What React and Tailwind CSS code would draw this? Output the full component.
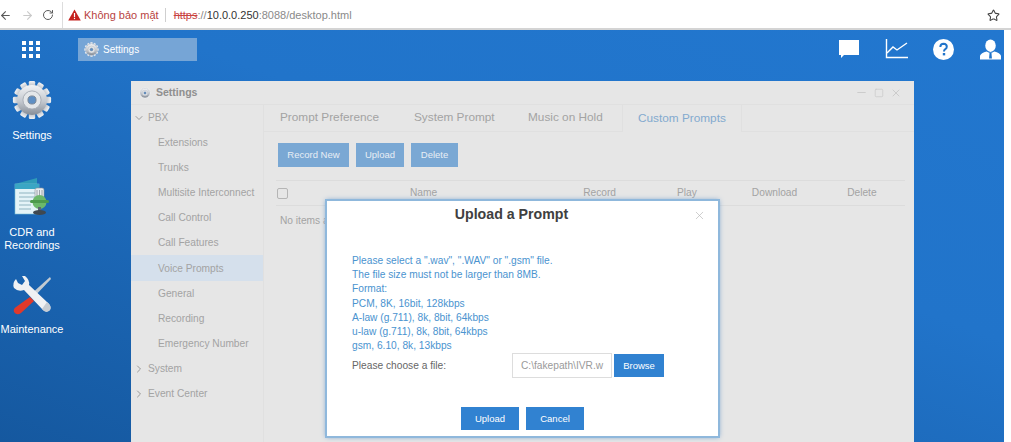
import { ArrowLeft, ArrowRight, RotateCw, Star, ChevronDown, ChevronRight, Minus, Square, X } from 'lucide-react'

const FONT = "font-['Liberation_Sans',Arial,sans-serif]"

const menuItems = ['Extensions', 'Trunks', 'Multisite Interconnect', 'Call Control', 'Call Features', 'Voice Prompts', 'General', 'Recording', 'Emergency Number']
const formatLines = [
  'Please select a ".wav", ".WAV" or ".gsm" file.',
  'The file size must not be larger than 8MB.',
  'Format:',
  'PCM, 8K, 16bit, 128kbps',
  'A-law (g.711), 8k, 8bit, 64kbps',
  'u-law (g.711), 8k, 8bit, 64kbps',
  'gsm, 6.10, 8k, 13kbps',
]

function Gear({ size = 44, id = 'gear' }) {
  const teeth = Array.from({ length: 12 }, (_, i) => i * 30)
  return (
    <svg width={size} height={size} viewBox="0 0 44 44">
      <defs>
        <linearGradient id={id} x1="0" y1="0" x2="0" y2="1">
          <stop offset="0" stopColor="#f2f3f5" />
          <stop offset="0.55" stopColor="#c3c8cf" />
          <stop offset="1" stopColor="#868d97" />
        </linearGradient>
      </defs>
      {teeth.map((a) => (
        <rect key={a} x="18.5" y="1" width="7" height="9" rx="1.5" fill={`url(#${id})`} transform={`rotate(${a} 22 22)`} />
      ))}
      <circle cx="22" cy="22" r="16.5" fill={`url(#${id})`} />
      <circle cx="22" cy="22" r="10" fill="#e4e7ea" stroke="#a4aab3" strokeWidth="1" />
      <circle cx="22" cy="22" r="4.5" fill="#5f8fc4" stroke="#7b8591" strokeWidth="1" />
    </svg>
  )
}

function CdrIcon() {
  return (
    <svg width="38" height="38" viewBox="0 0 38 38">
      <path d="M2 6 L24 0 V6 L2 8 Z" fill="#2f9bb8" />
      <rect x="2" y="6" width="24" height="30" fill="#e4f3f7" stroke="#7cc2d6" strokeWidth="0.6" />
      <rect x="2" y="6" width="24" height="5" fill="#3aa6c4" />
      <path d="M6 15 H22 M6 19 H22 M6 23 H20 M6 27 H18 M6 31 H18" stroke="#8fb4c0" strokeWidth="1" />
      <rect x="22" y="10" width="9" height="10" rx="2" fill="#e8ecef" stroke="#8b9299" strokeWidth="0.6" />
      <path d="M24 12 V18 M26.5 12 V18 M29 12 V18" stroke="#8b9299" strokeWidth="0.8" />
      <ellipse cx="26.5" cy="24" rx="7" ry="7" fill="#6cb86a" />
      <rect x="17" y="22" width="19" height="3" rx="1.5" fill="#4d9a4c" />
      <rect x="25" y="29" width="3" height="4" fill="#5c6670" />
      <ellipse cx="26.5" cy="34.5" rx="6.5" ry="2.5" fill="#3f4850" />
    </svg>
  )
}

function ToolsIcon() {
  return (
    <svg width="40" height="40" viewBox="0 0 40 40">
      <path d="M38 1 L39 3 L21 22 L18 19 Z" fill="#c3cbd2" />
      <path d="M18 21 L22 25 L9 37 Q5 40 2 36 Q1 33 4 31 Z" fill="#e0392b" />
      <path d="M4 3 Q0 7 2 12 Q6 16 12 14 L30 33 Q34 38 38 34 Q40 30 35 26 L17 9 Q18 4 13 0 L10 0 L13 5 L10 9 L6 7 Z" fill="#f0f1f3" />
      <path d="M30 33 Q34 38 38 34 Q40 30 35 26 Z" fill="#c7ccd2" />
    </svg>
  )
}

function DesktopIcon({ icon, children, className }) {
  return (
    <div className={`flex flex-col items-center text-center text-[11px] leading-[13.5px] text-white ${className}`}>
      {icon}
      {children}
    </div>
  )
}

export default function App() {
  return (
    <div className={`${FONT} flex h-[442px] w-[1011px] flex-col overflow-hidden bg-white`}>
      {/* browser toolbar */}
      <div className="flex h-[30px] shrink-0 items-center border-b-2 border-[#d4d4d4] pt-[2px] text-[#5a5a5a]">
        <ArrowLeft size={13} className="-ml-[1px] shrink-0" />
        <ArrowRight size={13} className="ml-[9px] shrink-0 text-[#c9c9c9]" />
        <RotateCw size={12} className="ml-[8px] shrink-0" />
        <div className="ml-[8px] flex h-[26px] flex-1 items-center border-l border-[#dddddd] pl-[5px] text-[11px]">
          <svg width="13" height="12" viewBox="0 0 13 12" className="shrink-0">
            <path d="M6.5 0.5 L12.8 11.5 H0.2 Z" fill="#c5221f" />
            <rect x="5.9" y="4" width="1.2" height="4" fill="#fff" />
            <rect x="5.9" y="8.8" width="1.2" height="1.3" fill="#fff" />
          </svg>
          <span className="ml-[3px] text-[#b8433f]">Không bảo mật</span>
          <span className="ml-[6px] h-[14px] w-px bg-[#cfcfcf]" />
          <span className="ml-[8px] text-[#c9423f] line-through decoration-[#c9423f]">https</span>
          <span className="text-[#8a8a8a]">://</span>
          <span className="text-[#333333]">10.0.0.250</span>
          <span className="text-[#8a8a8a]">:8088/desktop.html</span>
          <Star size={13} className="ml-auto mr-[11px] text-[#444444]" strokeWidth={2} />
        </div>
      </div>

      {/* desktop */}
      <div className="relative mr-[7px] min-h-0 flex-1 overflow-hidden bg-[linear-gradient(200deg,#2277cf_0%,#2174ca_40%,#15589f_100%)]">
        <div className="flex h-[38px] items-center pr-[3px]">
          <div className="ml-[22px] grid w-[18px] grid-cols-3 gap-[2.5px]">
            {Array.from({ length: 9 }).map((_, i) => (
              <span key={i} className="h-[4px] w-[4px] bg-white" />
            ))}
          </div>
          <div className="ml-[38px] flex h-[23px] w-[119px] items-center bg-[#76a5d6] pl-[6px] text-[10px] text-white">
            <Gear size={15} id="gear-task" />
            <span className="ml-[4px]">Settings</span>
          </div>
          <div className="ml-auto flex items-center gap-[25px]">
            <svg width="22" height="20" viewBox="0 0 22 20">
              <path d="M1 1 H21 V16 H6 L3 19 V16 H1 Z" fill="#fff" />
            </svg>
            <svg width="23" height="20" viewBox="0 0 23 20" fill="none" stroke="#fff" strokeWidth="1.4">
              <path d="M1.5 0 V18.5 H23" />
              <path d="M2 14 L8 8 L12 11 L22 4" />
            </svg>
            <svg width="21" height="21" viewBox="0 0 21 21">
              <circle cx="10.5" cy="10.5" r="10.5" fill="#fff" />
              <path d="M7.3 8 Q7.5 4.8 10.6 4.8 Q13.8 5 13.8 7.8 Q13.8 9.4 12 10.4 Q11 11 11 12.6" fill="none" stroke="#2174ca" strokeWidth="2" />
              <rect x="9.8" y="14" width="2.4" height="2.4" fill="#2174ca" />
            </svg>
            <svg width="21" height="21" viewBox="0 0 22 21" className="ml-[1px]">
              <ellipse cx="11" cy="6.5" rx="5.5" ry="6.5" fill="#fff" />
              <path d="M0 21 V17 Q1 14 7 12.5 L9.5 14 H12.5 L15 12.5 Q21 14 22 17 V21 Z" fill="#fff" />
              <path d="M10 14 H12 L12.5 20 H9.5 Z" fill="#2174ca" />
            </svg>
          </div>
        </div>

        {/* desktop icons */}
        <div className="flex w-[64px] flex-col items-center">
          <DesktopIcon icon={<Gear size={40} id="gear-desk" />} className="mt-[12px]">
            <span className="mt-[9px]">Settings</span>
          </DesktopIcon>
          <DesktopIcon icon={<CdrIcon />} className="mt-[35px]">
            <span className="mt-[10px]">CDR and<br />Recordings</span>
          </DesktopIcon>
          <DesktopIcon icon={<ToolsIcon />} className="mt-[23px]">
            <span className="mt-[7px]">Maintenance</span>
          </DesktopIcon>
        </div>

        {/* settings window */}
        <div className="absolute left-[131px] top-[51px] flex h-[380px] w-[783px] flex-col bg-[#e6e6e6] text-[10.2px] text-[#a3a3a3]">
          <div className="flex h-[24px] shrink-0 items-center border-b border-[#e0e0e0] pl-[8px] pr-[12px]">
            <Gear size={12} id="gear-title" />
            <span className="ml-[5px] text-[10.5px] font-bold text-[#8f8f8f]">Settings</span>
            <Minus size={13} className="ml-auto text-[#cccccc]" />
            <Square size={10} className="ml-[6px] text-[#cccccc]" />
            <X size={12} className="ml-[6px] text-[#cccccc]" />
          </div>
          <div className="flex min-h-0 flex-1">
            <div className="w-[133px] shrink-0 border-r border-[#e0e0e0]">
              <div className="flex h-[25px] items-center pl-[2px]">
                <ChevronDown size={12} className="text-[#9a9a9a]" />
                <span className="ml-[3px]">PBX</span>
              </div>
              {menuItems.map((item) => (
                <div
                  key={item}
                  className={`flex items-center pl-[27px] ${item === 'Voice Prompts' ? 'h-[26px] bg-[#d5e0ec] pt-[2px]' : 'h-[25px]'}`}
                >
                  {item}
                </div>
              ))}
              {['System', 'Event Center'].map((item) => (
                <div key={item} className="flex h-[25px] items-center pl-[2px]">
                  <ChevronRight size={12} className="text-[#9a9a9a]" />
                  <span className="ml-[3px]">{item}</span>
                </div>
              ))}
            </div>
            <div className="min-w-0 flex-1">
              <div className="flex h-[27px] items-center border-b border-[#e0e0e0] pl-[16px] text-[11.8px]">
                <span className="w-[134px]">Prompt Preference</span>
                <span className="w-[114px]">System Prompt</span>
                <span className="w-[94px]">Music on Hold</span>
                <span className="-mb-px flex h-[27px] w-[120px] items-center border-x border-[#e0e0e0] bg-[#e6e6e6] pl-[15px] text-[#83aacf]">
                  Custom Prompts
                </span>
              </div>
              <div className="mt-[11px] flex gap-[7px] pl-[14px] text-[9.5px] text-[#e8eef5]">
                <span className="flex h-[24px] w-[71px] items-center justify-center bg-[#7aa8d4]">Record New</span>
                <span className="flex h-[24px] w-[48px] items-center justify-center bg-[#7aa8d4]">Upload</span>
                <span className="flex h-[24px] w-[47px] items-center justify-center bg-[#7aa8d4]">Delete</span>
              </div>
              <div className="ml-[12px] mr-[9px] mt-[13px] flex h-[26px] items-center border-y border-[#dcdcdc]">
                <span className="ml-[1px] h-[11px] w-[11px] rounded-[2px] border border-[#b5b5b5]" />
                <span className="ml-[122px]">Name</span>
                <span className="ml-[146px]">Record</span>
                <span className="ml-[61px]">Play</span>
                <span className="ml-[55px]">Download</span>
                <span className="ml-[50px]">Delete</span>
              </div>
              <div className="ml-[16px] mt-[7px]">No items available</div>
            </div>
          </div>

          {/* upload modal */}
          <div className="absolute left-[196px] top-[120px] flex h-[235px] w-[391px] flex-col bg-white px-[25px] shadow-[0_0_0_2px_#8fb8dc,0_0_5px_1px_#6f9ccb]">
            <div className="relative flex h-[28px] shrink-0 items-center justify-center pr-[22px] text-[14.2px] font-bold text-[#404040]">
              Upload a Prompt
              <X size={13} strokeWidth={1.2} className="absolute right-[-13px] top-[8px] text-[#b5b5b5]" />
            </div>
            <div className="mt-[25px] leading-[14.2px] text-[#4a93cf]">
              {formatLines.map((line) => (
                <div key={line}>{line}</div>
              ))}
            </div>
            <div className="flex h-[25px] items-center text-[#666666]">
              <span className="w-[160px]">Please choose a file:</span>
              <span className="flex h-[25px] w-[100px] items-center overflow-hidden whitespace-nowrap border border-[#dddddd] pl-[8px] text-[#9a9a9a]">
                C:\fakepath\IVR.w
              </span>
              <span className="ml-[2px] flex h-[23px] w-[50px] items-center justify-center bg-[#3182d1] text-[9.5px] text-white">Browse</span>
            </div>
            <div className="mt-[29px] flex justify-center gap-[7px] text-[9.5px] text-white">
              <span className="flex h-[23px] w-[58px] items-center justify-center bg-[#3182d1]">Upload</span>
              <span className="flex h-[23px] w-[58px] items-center justify-center bg-[#3182d1]">Cancel</span>
            </div>
          </div>
        </div>
      </div>
    </div>
  )
}
